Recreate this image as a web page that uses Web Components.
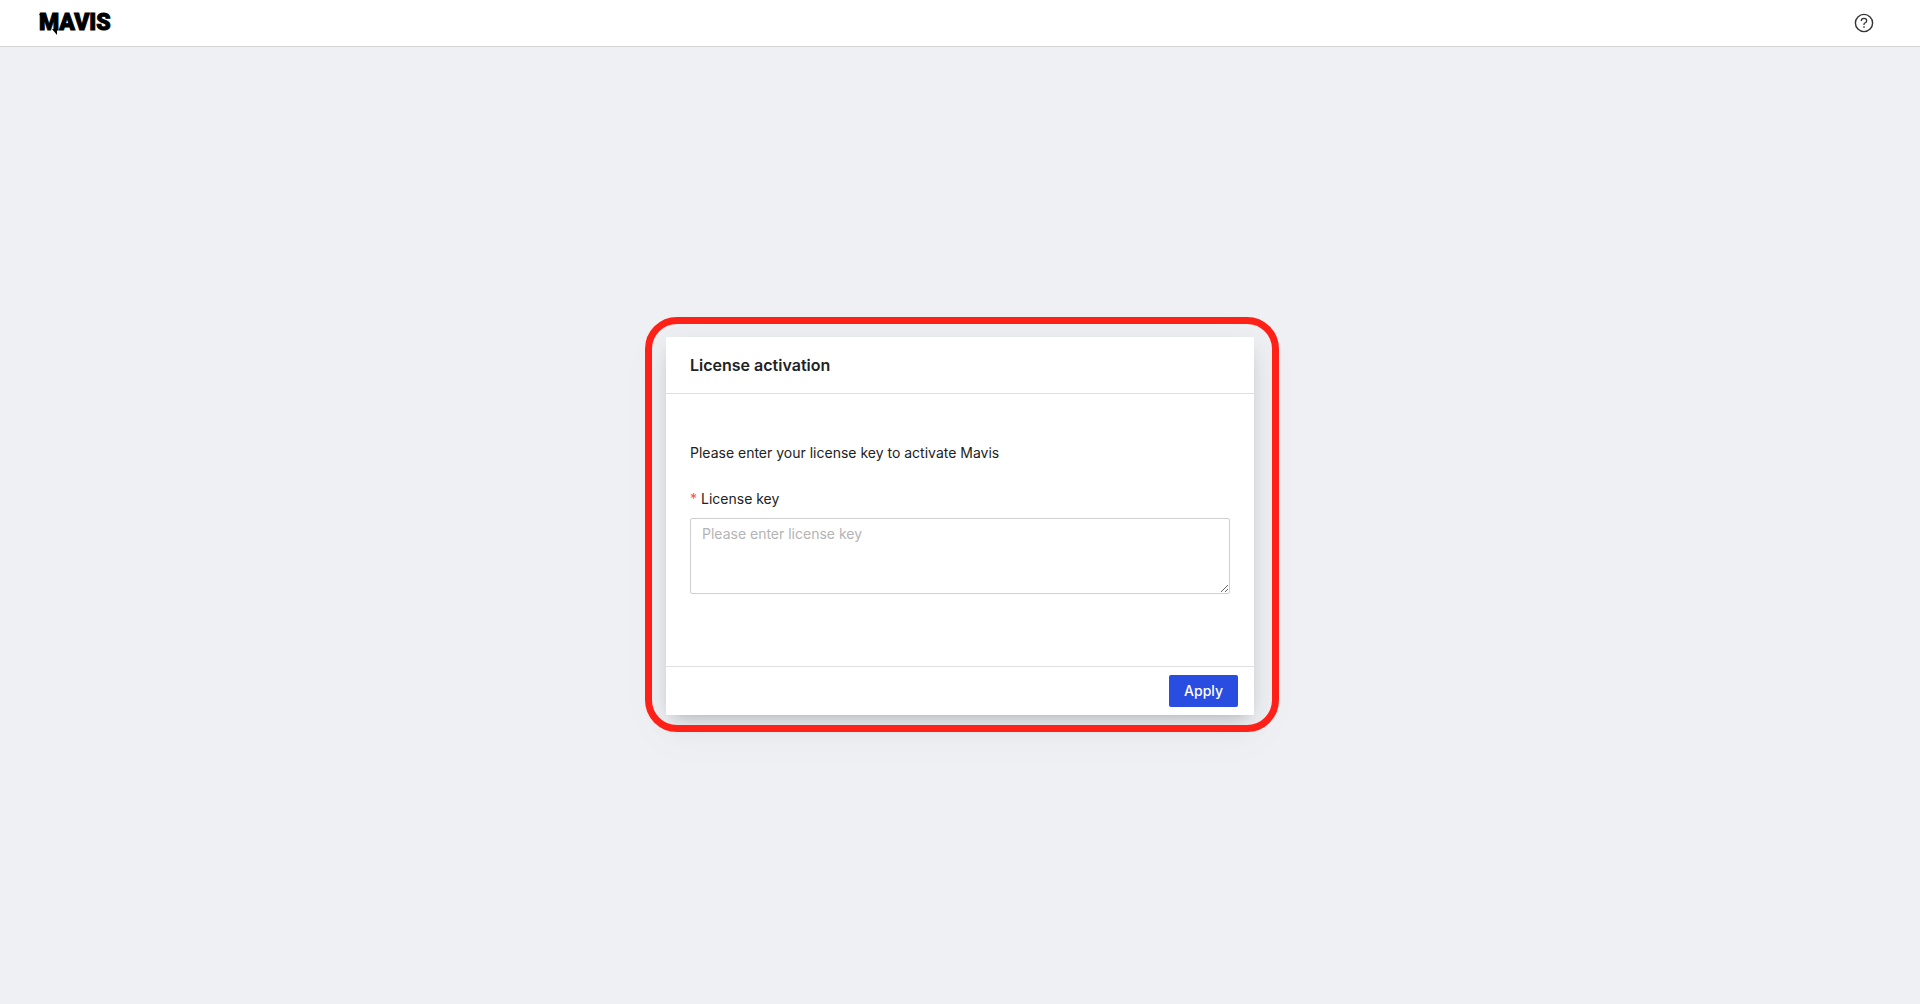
<!DOCTYPE html>
<html lang="en">
<head>
<meta charset="utf-8">
<meta name="viewport" content="width=device-width, initial-scale=1">
<title>Mavis</title>
<style>
html, body { height: 100%; margin: 0; }
body { font: 14px/22px Inter, "Liberation Sans", sans-serif; color: #222; }
</style>
</head>
<body>
<mavis-app>
  <mavis-header slot="header"></mavis-header>
  <license-card>
    <span slot="title">License activation</span>
    <license-form></license-form>
    <apply-button slot="footer">Apply</apply-button>
  </license-card>
</mavis-app>
<script>
function define(name, markup) {
  const template = document.createElement('template');
  template.innerHTML = '<style>*{box-sizing:border-box}</style>' + markup;
  customElements.define(name, class extends HTMLElement {
    constructor() {
      super();
      this.attachShadow({ mode: 'open' }).append(template.content.cloneNode(true));
    }
  });
}

define('mavis-app', `
<style>
:host { display: flex; flex-direction: column; min-height: 100%; background: #eef0f4; }
main { flex: 1; display: flex; align-items: center; justify-content: center; padding: 24px; }
</style>
<slot name="header"></slot>
<main><slot></slot></main>`);

define('mavis-header', `
<style>
:host { display: block; }
header { height: 47px; display: flex; align-items: center; justify-content: space-between; padding: 0 46px 0 39px; background: #fff; border-bottom: 1px solid #d4d4d7; }
a { display: flex; color: #000; text-decoration: none; font: 900 23px/24px Roboto, sans-serif; position: relative; -webkit-text-stroke: 1px #000; }
a svg { position: absolute; left: 0; top: 0; overflow: visible; }
button { display: flex; padding: 0; border: 0; background: none; color: #333; cursor: pointer; }
</style>
<header>
  <a href="#">MAVIS<svg width="20" height="24" aria-hidden="true"><path d="M0 3h6v4H3zM13 18h5v6z"/></svg></a>
  <button aria-label="Help">
    <svg width="20" height="20" viewBox="0 0 20 20" fill="none" stroke="currentColor"><circle cx="10" cy="10" r="8.6" stroke-width="1.4"/><path d="M7.3 8.1V7.7C7.3 6.2 8.5 5.3 10 5.3s2.7.9 2.7 2.4c0 1.2-.8 1.9-1.8 2.3-.6.3-.9.7-.9 1.3v.6" stroke-width="1.3"/><circle cx="10" cy="14" r=".85" fill="currentColor" stroke="none"/></svg>
  </button>
</header>`);

define('license-card', `
<style>
:host { display: block; position: relative; width: 100%; max-width: 588px; }
/* Highlight ring drawn around the card */
:host::after { content: ""; position: absolute; inset: -20px -25px -17px -21px; border: 7px solid #ff2017; border-radius: 32px; pointer-events: none; }
section { background: #fff; box-shadow: 0 8px 16px -8px rgba(0,0,0,.24), 0 9px 28px rgba(0,0,0,.05), 0 12px 48px 8px rgba(0,0,0,.03); }
h1 { margin: 0; padding: 16px 24px; font-size: 16px; line-height: 24px; font-weight: 600; border-bottom: 1px solid #e0e0e3; }
.body { padding: 48px 24px 72px; }
footer { display: flex; justify-content: flex-end; padding: 8px 16px; border-top: 1px solid #e0e0e3; }
</style>
<section>
  <h1><slot name="title"></slot></h1>
  <div class="body"><slot></slot></div>
  <footer><slot name="footer"></slot></footer>
</section>`);

define('license-form', `
<style>
:host { display: block; }
p { margin: 0 0 24px; }
label { display: flex; gap: 4px; margin-bottom: 8px; }
.star { color: #ff4d4f; }
textarea { display: block; width: 100%; height: 76px; margin: 0; padding: 4px 11px; font: inherit; color: inherit; background: #fff; border: 1px solid #d0d0d3; border-radius: 2px; resize: vertical; }
textarea::placeholder { color: #b4b4b4; opacity: 1; }
</style>
<p>Please enter your license key to activate Mavis</p>
<label for="key"><span class="star">*</span><span>License key</span></label>
<textarea id="key" required placeholder="Please enter license key"></textarea>`);

define('apply-button', `
<style>
:host { display: block; }
button { height: 32px; padding: 0 15px; border: 0; border-radius: 2px; background: #294de0; color: #fff; font: inherit; font-weight: 500; cursor: pointer; }
</style>
<button type="button"><slot></slot></button>`);
</script>
</body>
</html>
